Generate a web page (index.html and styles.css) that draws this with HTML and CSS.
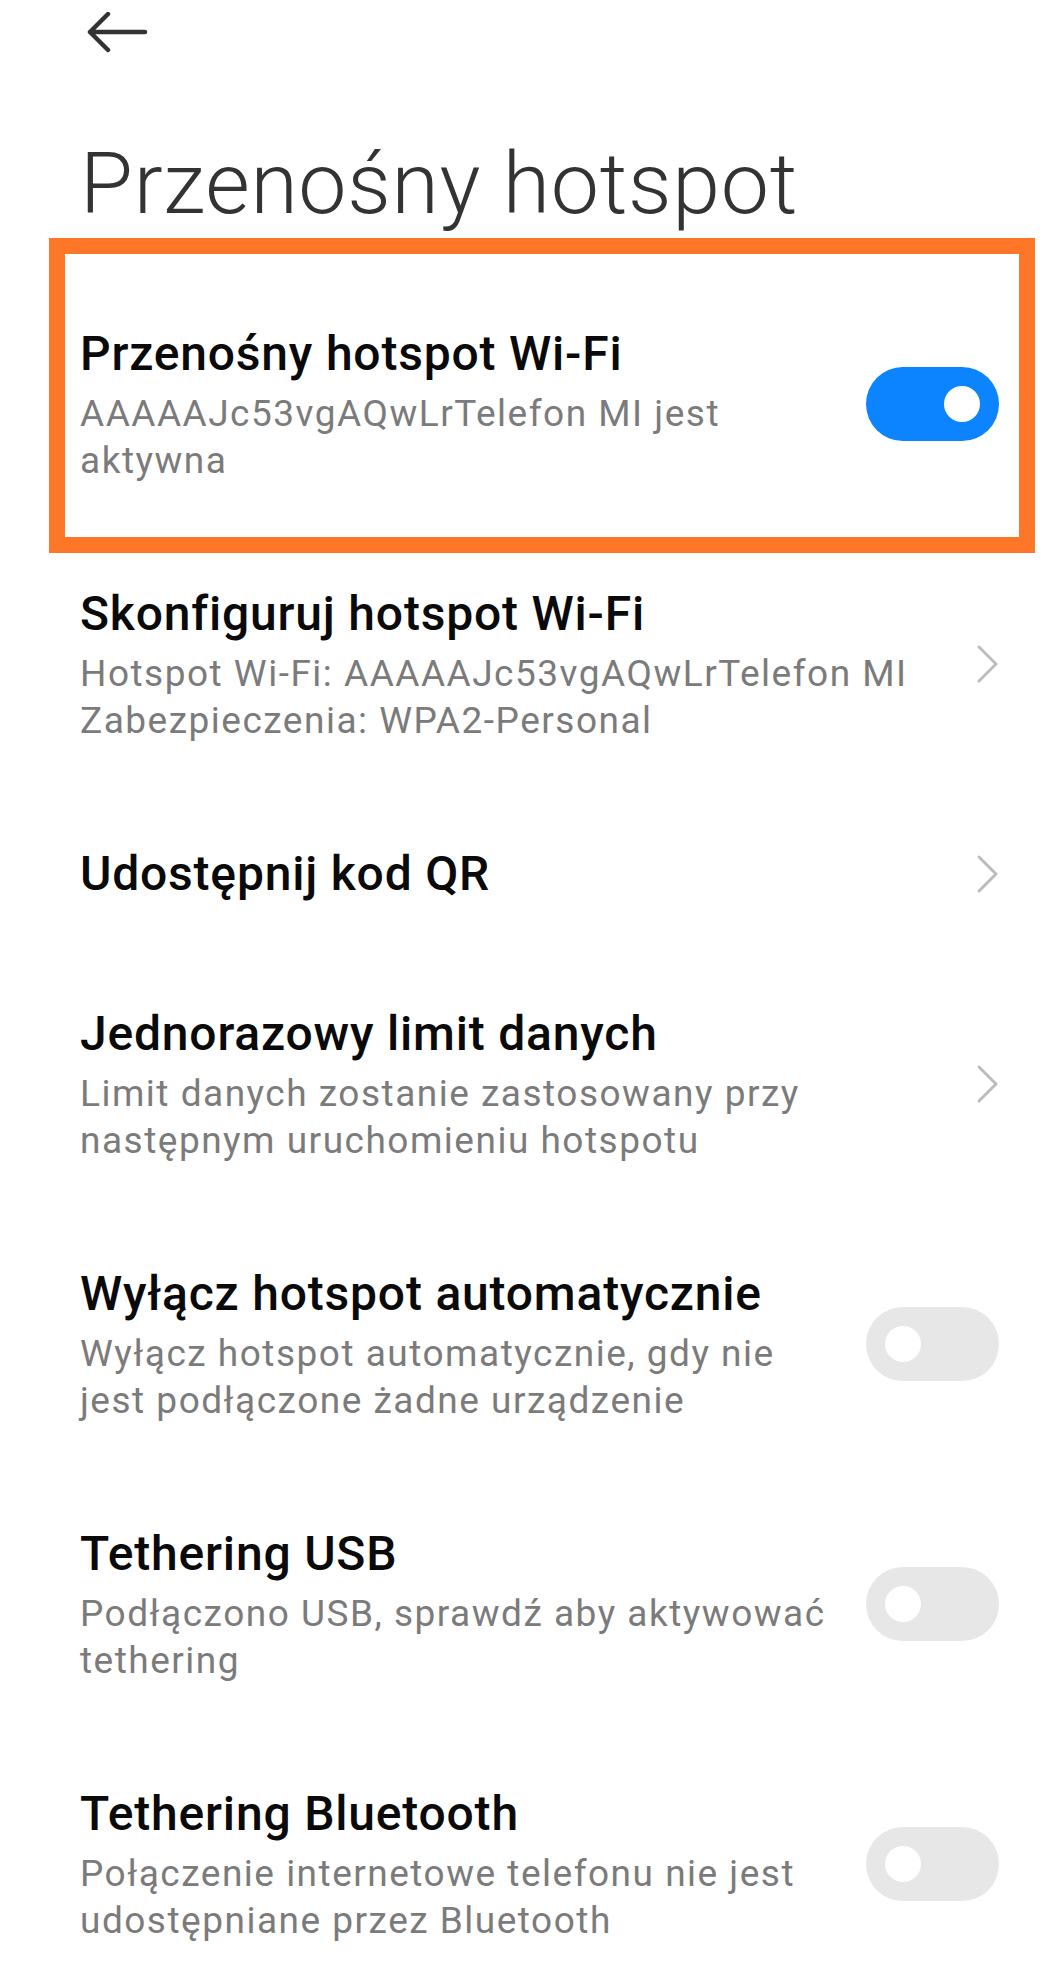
FILE: index.html
```html
<!DOCTYPE html>
<html lang="pl">
<head>
<meta charset="utf-8">
<title>Przenośny hotspot</title>
<link rel="stylesheet" href="styles.css">
</head>
<body>
<div class="screen">
  <header class="topbar">
    <svg class="back" width="62" height="44" viewBox="0 0 62 44" aria-label="Wstecz">
      <path d="M4 20 H59 M4 20 L22 2 M4 20 L22 38" fill="none" stroke="#333" stroke-width="4.5" stroke-linecap="round" stroke-linejoin="round"/>
    </svg>
  </header>

  <h1 class="page-title">Przenośny hotspot</h1>

  <ul class="settings">
    <li class="row highlighted">
      <div class="text">
        <div class="title">Przenośny hotspot Wi-Fi</div>
        <div class="sub">AAAAAJc53vgAQwLrTelefon MI jest<br>aktywna</div>
      </div>
      <span class="switch on"></span>
    </li>
    <li class="row">
      <div class="text">
        <div class="title">Skonfiguruj hotspot Wi-Fi</div>
        <div class="sub">Hotspot Wi-Fi: AAAAAJc53vgAQwLrTelefon MI<br>Zabezpieczenia: WPA2-Personal</div>
      </div>
      <svg class="chevron" width="23" height="40" viewBox="0 0 23 40"><path d="M3 3 L20 20 L3 37" fill="none" stroke="#bcbcbc" stroke-width="3" stroke-linecap="round" stroke-linejoin="round"/></svg>
    </li>
    <li class="row">
      <div class="text">
        <div class="title">Udostępnij kod QR</div>
      </div>
      <svg class="chevron" width="23" height="40" viewBox="0 0 23 40"><path d="M3 3 L20 20 L3 37" fill="none" stroke="#bcbcbc" stroke-width="3" stroke-linecap="round" stroke-linejoin="round"/></svg>
    </li>
    <li class="row">
      <div class="text">
        <div class="title">Jednorazowy limit danych</div>
        <div class="sub">Limit danych zostanie zastosowany przy<br>następnym uruchomieniu hotspotu</div>
      </div>
      <svg class="chevron" width="23" height="40" viewBox="0 0 23 40"><path d="M3 3 L20 20 L3 37" fill="none" stroke="#bcbcbc" stroke-width="3" stroke-linecap="round" stroke-linejoin="round"/></svg>
    </li>
    <li class="row">
      <div class="text">
        <div class="title">Wyłącz hotspot automatycznie</div>
        <div class="sub">Wyłącz hotspot automatycznie, gdy nie<br>jest podłączone żadne urządzenie</div>
      </div>
      <span class="switch"></span>
    </li>
    <li class="row">
      <div class="text">
        <div class="title">Tethering USB</div>
        <div class="sub">Podłączono USB, sprawdź aby aktywować<br>tethering</div>
      </div>
      <span class="switch"></span>
    </li>
    <li class="row">
      <div class="text">
        <div class="title">Tethering Bluetooth</div>
        <div class="sub">Połączenie internetowe telefonu nie jest<br>udostępniane przez Bluetooth</div>
      </div>
      <span class="switch"></span>
    </li>
  </ul>
</div>
</body>
</html>
```

FILE: styles.css
```css
html, body {
  margin: 0;
  padding: 0;
  background: #ffffff;
}

body {
  font-family: Roboto, "Noto Sans", "Liberation Sans", sans-serif;
  color: #000;
}

.screen {
  padding: 0 51px 0 80px;
}

.topbar {
  height: 68px;
  display: flex;
  align-items: center;
  padding-left: 6px;
}

.back {
  display: block;
}

.page-title {
  margin: 66px 0 0 0;
  font-size: 86px;
  line-height: 100px;
  font-weight: 300;
  color: #333333;
  letter-spacing: 0.7px;
}

.settings {
  list-style: none;
  margin: 40px 0 0 0;
  padding: 0;
}

.row {
  display: flex;
  align-items: center;
  gap: 24px;
  padding: 50px 0;
}

.text {
  flex: 1;
  min-width: 0;
  white-space: nowrap;
}

.title {
  font-size: 48px;
  line-height: 60px;
  font-weight: 500;
  color: #0a0a0a;
  letter-spacing: 0.8px;
}

.sub {
  margin-top: 6px;
  font-size: 37px;
  line-height: 47px;
  font-weight: 400;
  color: #7b7b7b;
  letter-spacing: 1.5px;
}

.highlighted {
  position: relative;
}

.highlighted::before {
  content: "";
  position: absolute;
  top: -36px;
  bottom: -19px;
  left: -31px;
  right: -36px;
  border: 16px solid #fe7628;
  pointer-events: none;
}

.switch {
  flex: none;
  position: relative;
  width: 133px;
  height: 74px;
  border-radius: 37px;
  background: #e7e7e7;
}

.switch::after {
  content: "";
  position: absolute;
  top: 19px;
  left: 19px;
  width: 36px;
  height: 36px;
  border-radius: 50%;
  background: #ffffff;
}

.switch.on {
  background: #0d84ff;
}

.switch.on::after {
  left: 78px;
}

.chevron {
  flex: none;
  display: block;
}
```
